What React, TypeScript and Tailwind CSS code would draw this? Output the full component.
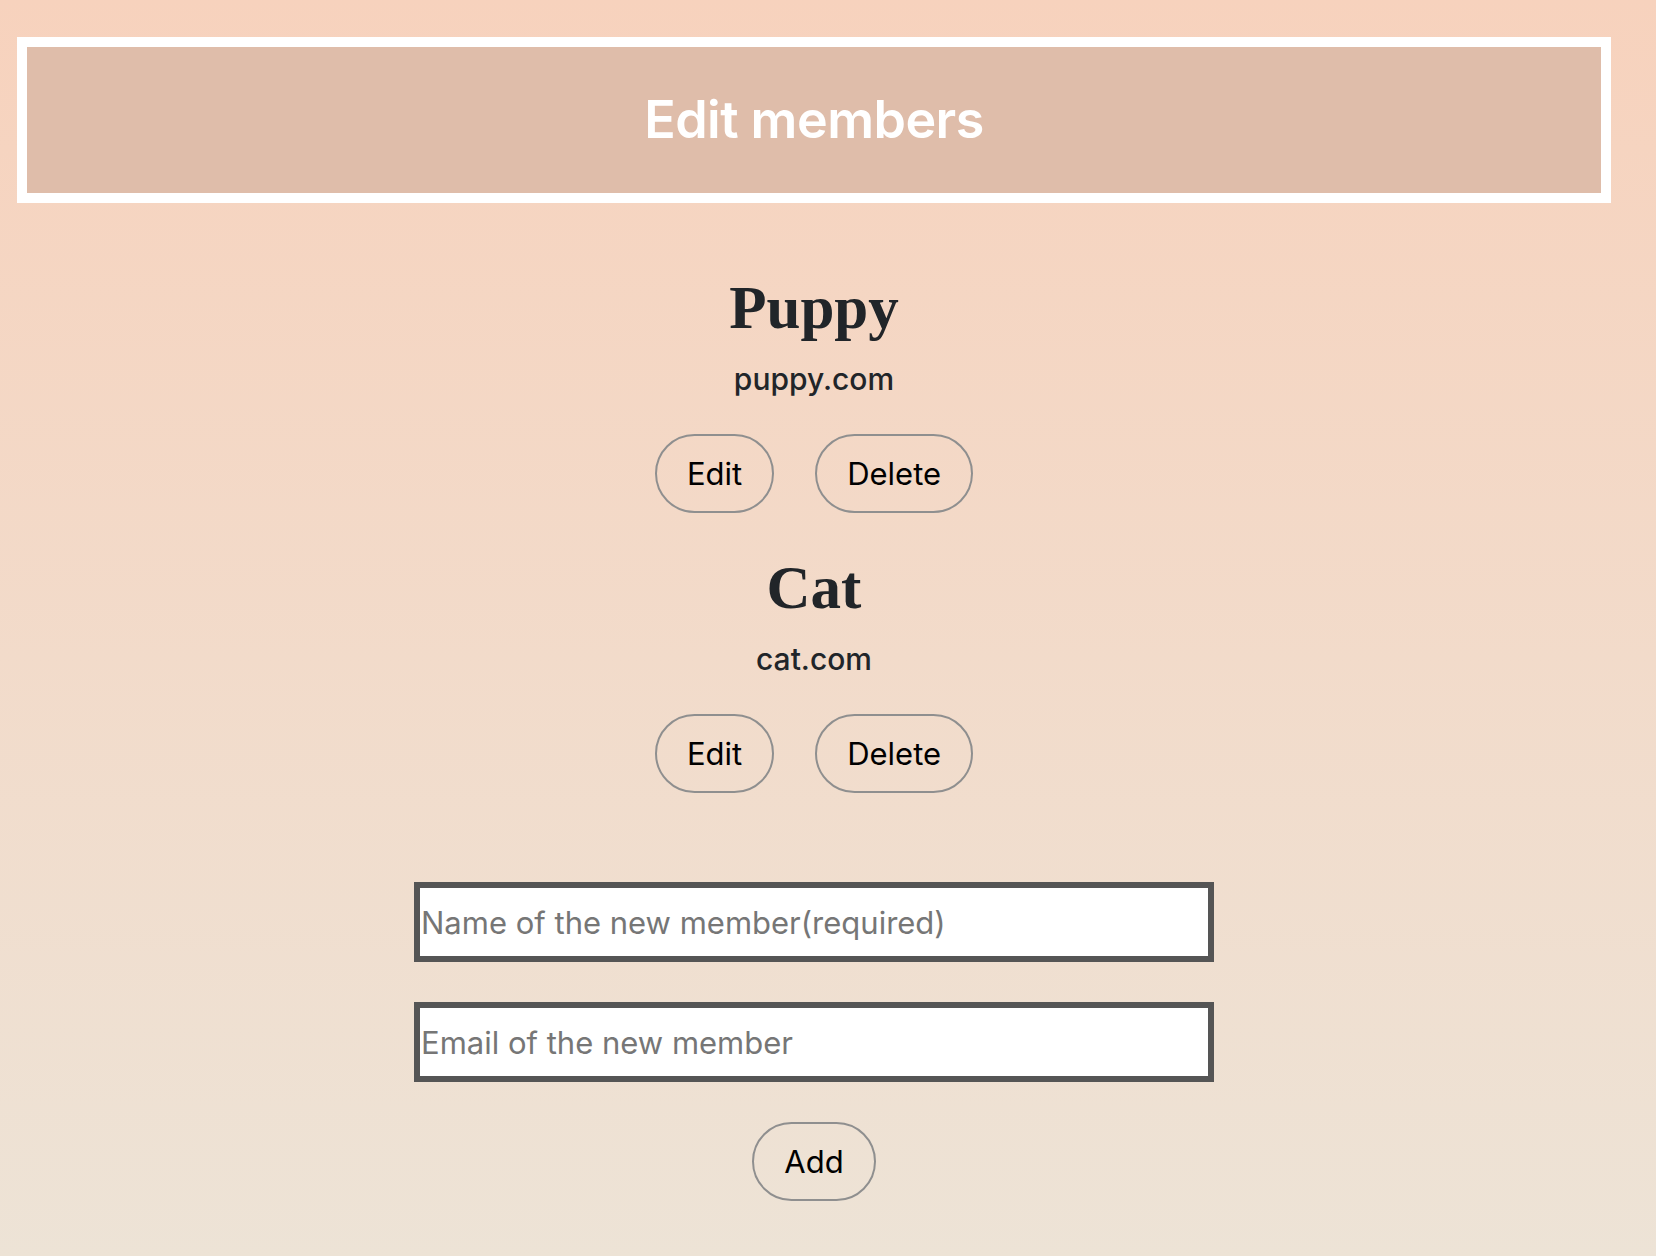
import React from 'react';

const members = [
  { name: 'Puppy', email: 'puppy.com' },
  { name: 'Cat', email: 'cat.com' },
];

const sans = "font-['Inter','Helvetica_Neue',Arial,sans-serif]";

const PillButton: React.FC<{ label: string }> = ({ label }) => (
  <button
    type="button"
    className={`${sans} h-[79px] px-[30px] rounded-full border-2 border-[#8f8f8f] bg-transparent text-black text-[31px] leading-none`}
  >
    {label}
  </button>
);

export default function App() {
  return (
    <div className="min-h-screen bg-gradient-to-b from-[#f7d2bd] to-[#ede3d6] pt-[37px] pl-[17px] pr-[45px] pb-[55px]">
      <header className="h-[166px] border-[10px] border-white bg-[#dfbdaa] flex items-center justify-center">
        <h1 className={`${sans} text-white text-[52px] font-semibold leading-none tracking-[-0.01em]`}>
          Edit members
        </h1>
      </header>

      <main className="flex flex-col items-center pt-[75px]">
        {members.map((m) => (
          <section key={m.name} className="flex flex-col items-center mt-[45px] first:mt-0">
            <h2 className="font-['Liberation_Serif','Times_New_Roman',serif] font-bold text-[61px] leading-[60px] text-[#212529]">
              {m.name}
            </h2>
            <p className={`${sans} mt-[23px] text-[30px] leading-[36px] font-medium text-[#212529]`}>{m.email}</p>
            <div className="mt-[37px] flex gap-[41px]">
              <PillButton label="Edit" />
              <PillButton label="Delete" />
            </div>
          </section>
        ))}

        {/* new member form */}
        <form className="mt-[89px] flex flex-col items-center gap-[40px]" onSubmit={(e) => e.preventDefault()}>
          <input
            type="text"
            placeholder="Name of the new member(required)"
            className={`${sans} w-[800px] h-[80px] border-[6px] border-[#555555] bg-white pl-[1px] text-[31px] text-black placeholder:text-[#767676] outline-none`}
          />
          <input
            type="email"
            placeholder="Email of the new member"
            className={`${sans} w-[800px] h-[80px] border-[6px] border-[#555555] bg-white pl-[1px] text-[31px] text-black placeholder:text-[#767676] outline-none`}
          />
          <PillButton label="Add" />
        </form>
      </main>
    </div>
  );
}
